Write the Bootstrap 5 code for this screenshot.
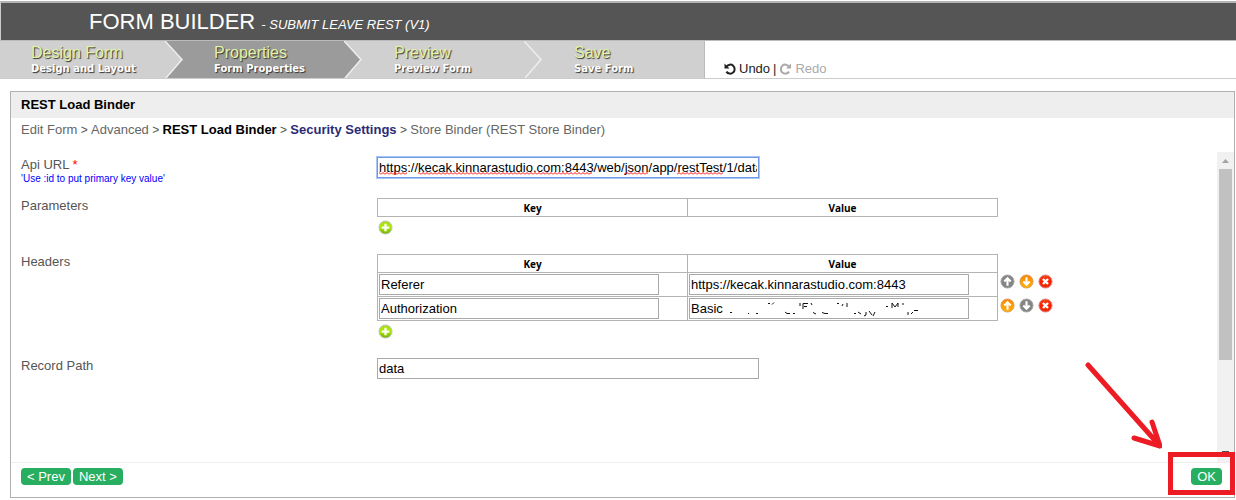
<!DOCTYPE html>
<html lang="en">
<head>
<meta charset="utf-8">
<meta name="viewport" content="width=device-width, initial-scale=1">
<title>Form Builder - Submit Leave REST</title>
<link href="https://cdn.jsdelivr.net/npm/bootstrap@5.3.0/dist/css/bootstrap.min.css" rel="stylesheet">
<style>
body{font:13px/16px "Liberation Sans",Arial,sans-serif;color:#555;background:#fff}
.topbar{background:#555;border-top:2px solid #b4b6b6;border-left:1px solid #ccc;margin-top:1px;height:39px;padding-left:88px;color:#fff}
.topbar h1{font-size:22px;line-height:37px;font-weight:400}
.topbar small{font-size:13px;font-style:italic}
.steps{border-top:1px solid #bbb;border-bottom:1px solid #ccc;min-height:39px}
.step{width:180px;height:37px;padding:3px 0 0 31px;background:#d0d0d0;text-decoration:none;color:#fff;text-shadow:1px 1px 1px #333}
.step.first{width:183px}
.step.final{width:162px;border-right:1px solid #bbb}
.step.current{background:#9b9b9b}
.step b{display:block;font-weight:400;font-size:16px;line-height:18px;color:#e3f3a4}
.step span{display:block;font:bold 10px/14px "DejaVu Sans",Verdana,sans-serif}
.step svg{position:absolute;right:0;top:0}
.history{padding:0 0 1px 19px;color:#222;gap:3px}
.history button,.icon-btn{border:0;background:none;padding:0;color:inherit}
.history button{gap:3px}
.history button:disabled{color:#aaa}
.panel{margin:12px 1px 2px 10px;border:1px solid #b0b0b0}
.panel-title{background:#eee;color:#000;font-size:13px;line-height:16px;font-weight:700;padding:5px 10px}
.crumbs{padding:4px 10px 14px;font-size:12px}
.crumbs a{color:#666;text-decoration:none;font-size:13px}
.crumbs a.here{color:#000;font-weight:700}
.crumbs a.sub{color:#2b2b78;font-weight:700}
.fields{padding:5px 0 83px 10px}
.field-row{margin-bottom:14px}
.label-col{width:356px;flex:none}
.star{color:#f00}
.hint{font-size:10px;line-height:11px;color:#00f}
.box{border:1px solid #a9a9a9;height:21px;padding:0 1px;color:#000;font-size:13px;display:block;border-radius:0;outline:0;background:#fff}
.wide{width:382px}
.cellbox{width:280px}
.active-box{border-color:#6d9ae4;box-shadow:0 0 0 1px #a9c6f5}
.overlay{position:absolute;left:0;top:0;pointer-events:none}
.pairs{border-collapse:collapse}
.pairs th{font:bold 10px/16px "Open Sans",Verdana,sans-serif;color:#000;width:310px;border:1px solid #b4b4b4;text-align:center;padding:1px 0 0}
.pairs td{border:1px solid #b4b4b4;height:24px;padding:1px}
.pairs .tools{border:0;width:60px;padding:0 0 6px 2px}
.icon-btn svg{display:block}
.add{display:block;margin:3px 0 5px 1px}
.track{width:17px;background:#f1f1f1;flex:none}
.thumb{width:13px;height:191px;background:#c1c1c1}
.foot{border-top:1px solid #eee;padding:5px 12px 12px 10px}
.go{border:0;border-radius:4px;background:#27ae60;color:#fff;font-size:13px;line-height:17px;padding:0 6px}
.frame{position:absolute;right:-13px;top:-16px;width:67px;height:43px;border:5px solid #ed1c24;pointer-events:none}
.pointer{position:absolute;right:60px;top:-107px;pointer-events:none}
</style>
<script src="https://cdn.jsdelivr.net/npm/bootstrap@5.3.0/dist/js/bootstrap.bundle.min.js"></script>
</head>
<body>
<svg width="0" height="0" class="position-absolute" aria-hidden="true">
<defs>
<linearGradient id="green" x2="0" y2="1"><stop stop-color="#a4dc10"/><stop offset=".5" stop-color="#b0ea00"/><stop offset="1" stop-color="#6fb000"/></linearGradient>
<linearGradient id="orange" x2="0" y2="1"><stop stop-color="#ff8200"/><stop offset="1" stop-color="#ffb400"/></linearGradient>
<linearGradient id="red" x2="0" y2="1"><stop stop-color="#f04a10"/><stop offset=".5" stop-color="#ff1c00"/><stop offset="1" stop-color="#e63000"/></linearGradient>
<pattern id="wave" width="4" height="3" patternUnits="userSpaceOnUse"><path d="M0 2.5L2 .5L4 2.5" fill="none" stroke="#f00"/></pattern>
<symbol id="plus" viewBox="0 0 16 16"><circle cx="8" cy="8" r="7" fill="url(#green)" stroke="#c4c4c4"/><path d="M8 4v8M4 8h8" stroke="#fff" stroke-width="2.4"/></symbol>
<symbol id="up" viewBox="0 0 16 16"><path d="M8 12.500V5M4.600 8L8 4.500L11.400 8" fill="none" stroke="#fff" stroke-width="2.300"/></symbol>
<symbol id="down" viewBox="0 0 16 16"><path d="M8 3.500V11M4.600 8L8 11.500L11.400 8" fill="none" stroke="#fff" stroke-width="2.300"/></symbol>
<symbol id="cross" viewBox="0 0 16 16"><circle cx="8" cy="8" r="7" fill="url(#red)" stroke="#d88"/><path d="M5.300 5.300l5.400 5.400M10.700 5.300l-5.400 5.400" stroke="#fff" stroke-width="2.500"/></symbol>
</defs>
</svg>

<header class="topbar"><h1 class="m-0">FORM BUILDER <small>- SUBMIT LEAVE REST (V1)</small></h1></header>

<nav class="steps d-flex flex-wrap" aria-label="Builder steps">
<a href="#" class="step first position-relative"><b>Design Form</b><span>Design and Layout</span>
<svg width="18" height="37"><path d="M0 0H18V37H0z" fill="#9b9b9b"/><path d="M0 0L17 18.500L1 37H0z" fill="#d0d0d0"/><path d="M0 0L17 18.500L1 37" fill="none" stroke="#eee" stroke-width="1.500"/></svg></a>
<a href="#" class="step current position-relative"><b>Properties</b><span>Form Properties</span>
<svg width="19" height="37"><path d="M0 0H19V37H0z" fill="#d0d0d0"/><path d="M0 0L17 18.500L1 37H0z" fill="#9b9b9b"/><path d="M0 0L17 18.500L1 37" fill="none" stroke="#eee" stroke-width="1.500"/></svg></a>
<a href="#" class="step position-relative"><b>Preview</b><span>Preview Form</span>
<svg width="19" height="37"><path d="M0 0L17 18.500L1 37" fill="none" stroke="#eee" stroke-width="1.500"/></svg></a>
<a href="#" class="step final"><b>Save</b><span>Save Form</span></a>
<div class="history d-flex align-items-end">
<button type="button" class="d-flex align-items-center"><svg width="12" height="12" viewBox="0 0 12 12"><path d="M2.500 3.500A4.500 4.500 0 1 1 2.400 8.600" fill="none" stroke="currentColor" stroke-width="2"/><path d="M.5.500V5.500H5.500z" fill="currentColor"/></svg>Undo</button>
<span>|</span>
<button type="button" disabled class="d-flex align-items-center"><svg width="13" height="12" viewBox="0 0 12 12"><path d="M9.500 3.500A4.500 4.500 0 1 0 9.600 8.600" fill="none" stroke="currentColor" stroke-width="2"/><path d="M11.500.500V5.500H6.500z" fill="currentColor"/></svg>Redo</button>
</div>
</nav>

<main class="panel">
<h2 class="panel-title m-0">REST Load Binder</h2>
<nav class="crumbs" aria-label="Property pages"><a href="#">Edit Form</a> &gt; <a href="#">Advanced</a> &gt; <a href="#" class="here">REST Load Binder</a> &gt; <a href="#" class="sub">Security Settings</a> &gt; <a href="#">Store Binder (REST Store Binder)</a></nav>
<div class="d-flex">
<form class="fields flex-grow-1">
<div class="d-flex field-row">
<div class="label-col"><label class="d-block" for="api">Api URL <span class="star">*</span></label><div class="hint">'Use :id to put primary key value'</div></div>
<div class="position-relative"><input id="api" class="box wide active-box" type="text" spellcheck="false" value="https://kecak.kinnarastudio.com:8443/web/json/app/restTest/1/data">
<svg class="overlay" width="382" height="21"><g transform="translate(0 15)" fill="url(#wave)"><path d="M2 0h28v3H2zM41 0h174v3H41zM247 0h24v3H247zM300 0h46v3H300z"/></g></svg></div>
</div>
<div class="d-flex field-row">
<div class="label-col">Parameters</div>
<div><table class="pairs"><thead><tr><th>Key</th><th>Value</th></tr></thead></table>
<button type="button" class="icon-btn add" aria-label="Add parameter"><svg width="15" height="15"><use href="#plus"/></svg></button></div>
</div>
<div class="d-flex field-row">
<div class="label-col">Headers</div>
<div><table class="pairs"><thead><tr><th>Key</th><th>Value</th></tr></thead><tbody>
<tr><td><input class="box cellbox" aria-label="Key 1" value="Referer"></td><td><input class="box cellbox" aria-label="Value 1" value="https://kecak.kinnarastudio.com:8443"></td>
<td class="tools"><div class="d-flex gap-1"><button type="button" class="icon-btn" aria-label="Move up"><svg width="15" height="15" viewBox="0 0 16 16"><circle cx="8" cy="8" r="7" fill="#858585" stroke="#aaa"/><use href="#up"/></svg></button><button type="button" class="icon-btn" aria-label="Move down"><svg width="15" height="15" viewBox="0 0 16 16"><circle cx="8" cy="8" r="7" fill="url(#orange)" stroke="#d9a060"/><use href="#down"/></svg></button><button type="button" class="icon-btn" aria-label="Delete"><svg width="15" height="15"><use href="#cross"/></svg></button></div></td></tr>
<tr><td><input class="box cellbox" aria-label="Key 2" value="Authorization"></td><td><div class="position-relative"><input class="box cellbox" aria-label="Value 2" value="Basic">
<svg class="overlay" width="280" height="21" fill="none" stroke="#111"><path d="M41 14.500h2M59 15.500h1M67 15.500h2M79 5.500h2M83 6.500l2-2M96 14l2 1.500h3M104 15.500h2M111 5v3M114 11V5.500h5M115 8.500h3M122 5l1 2M124 14.500l3 1.500M133 14.500l3 1h3M148 5.500h2M153 8l1-2M158 5v4M165 15.500h2M169 14l3 2M177 14v3l-2 1M180 13l3 4M186 14l-2 4M197 8.500h2M203 10V5l3 4l3-4v4M214 5v2M219 14v3M222 16l2-2M225 12.500h4"/></svg></div></td>
<td class="tools"><div class="d-flex gap-1"><button type="button" class="icon-btn" aria-label="Move up"><svg width="15" height="15" viewBox="0 0 16 16"><circle cx="8" cy="8" r="7" fill="url(#orange)" stroke="#d9a060"/><use href="#up"/></svg></button><button type="button" class="icon-btn" aria-label="Move down"><svg width="15" height="15" viewBox="0 0 16 16"><circle cx="8" cy="8" r="7" fill="#858585" stroke="#aaa"/><use href="#down"/></svg></button><button type="button" class="icon-btn" aria-label="Delete"><svg width="15" height="15"><use href="#cross"/></svg></button></div></td></tr>
</tbody></table>
<button type="button" class="icon-btn add" aria-label="Add header"><svg width="15" height="15"><use href="#plus"/></svg></button></div>
</div>
<div class="d-flex">
<label class="label-col" for="path">Record Path</label>
<input id="path" class="box wide" type="text" value="data">
</div>
</form>
<div class="track d-flex flex-column align-items-center" aria-hidden="true">
<svg width="17" height="17"><path d="M5 11h7L8.500 7z" fill="#a3a3a3"/></svg>
<div class="thumb"></div>
<svg class="mt-auto" width="17" height="11"><path d="M5 0h7v2H5z" fill="#505050"/></svg>
</div>
</div>
<footer class="foot d-flex">
<div class="d-flex" style="gap:2px"><button type="button" class="go">&lt; Prev</button><button type="button" class="go">Next &gt;</button></div>
<div class="position-relative ms-auto"><button type="button" class="go d-block">OK</button>
<div class="frame"></div>
<svg class="pointer" width="80" height="92" fill="none" stroke="#ed1c24" stroke-width="5" stroke-linecap="round" stroke-linejoin="round"><path d="M6 4L78 85M70 61L78 85L52 77"/></svg></div>
</footer>
</main>
</body>
</html>
